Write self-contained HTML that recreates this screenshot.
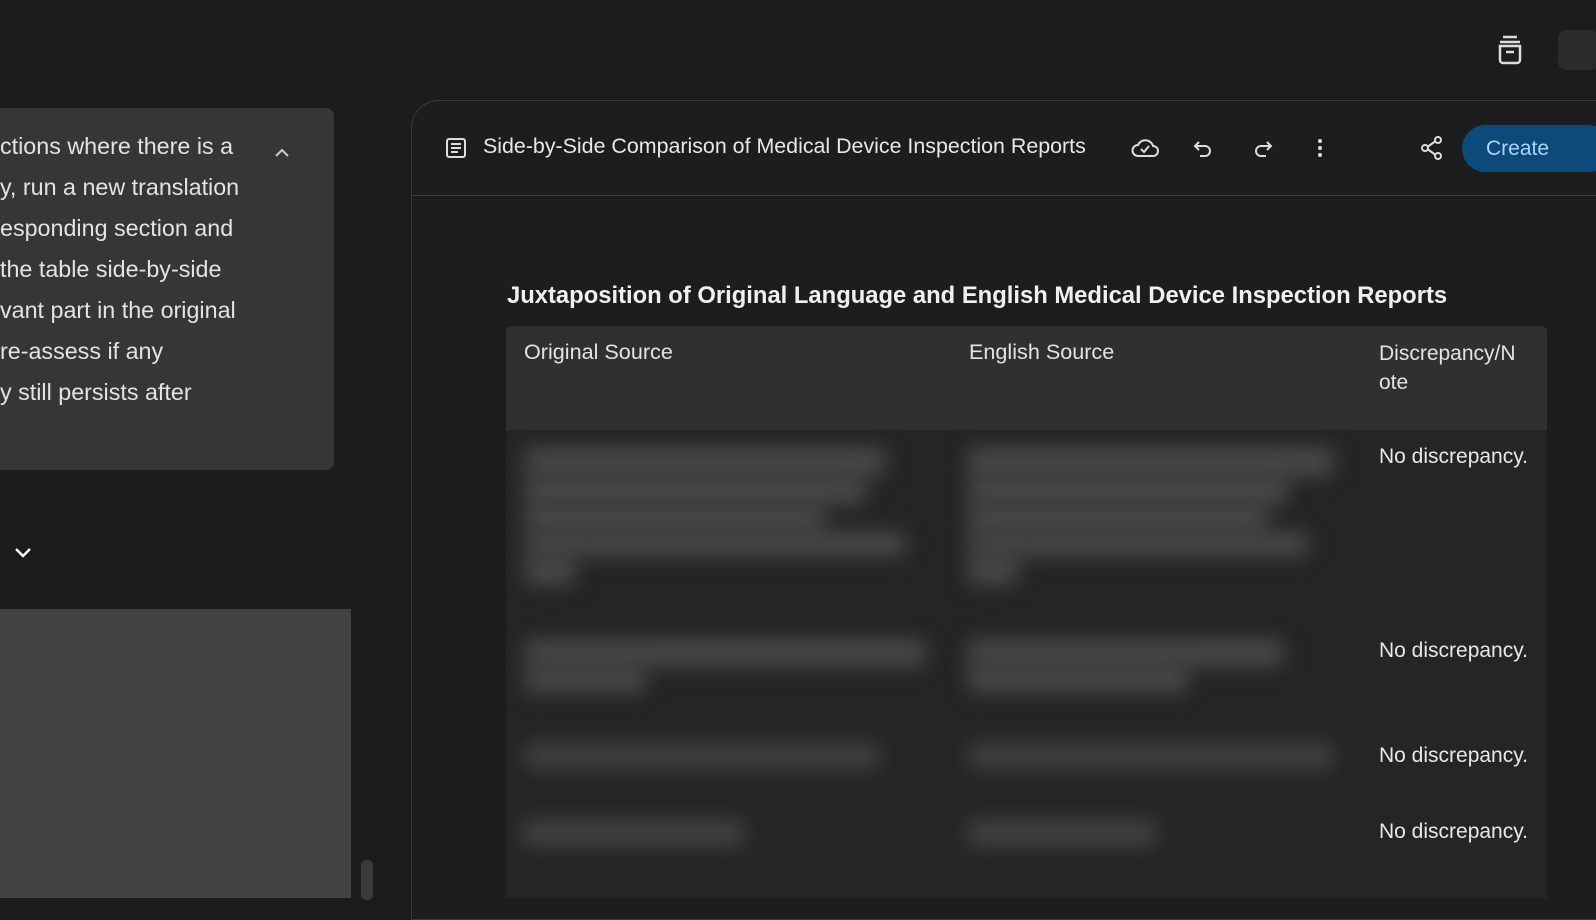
<!DOCTYPE html>
<html><head><style>
*{margin:0;padding:0;box-sizing:border-box}
body{width:1596px;height:898px;overflow:hidden;background:#1b1c1e;font-family:"Liberation Sans",sans-serif;color:#e3e3e3;position:relative}
.abs{position:absolute}
.bubble{left:0;top:108px;width:334px;height:362px;background:#353638;border-radius:0 8px 8px 0}
.panel{left:411px;top:100px;width:1200px;height:820px;border:1px solid #3a3b3d;border-right:none;border-radius:28px 0 0 0;background:#1c1d1f}
.hline{left:412px;top:195px;width:1184px;height:1px;background:#3c3d40}
.blur{filter:blur(10px);background:#4a4a4a;position:absolute;border-radius:4px}
.nd{position:absolute;left:1379px;font-size:21px;color:#e8e8e8;white-space:nowrap}
</style></head><body>
<div class="abs bubble"></div>
<div class="abs" style="left:0;top:126px;font-size:23.3px;line-height:41px;color:#e3e3e3;white-space:pre">ctions where there is a
y, run a new translation
esponding section and
the table side-by-side
vant part in the original
re-assess if any
y still persists after</div>
<svg class="abs" style="left:273px;top:146px" width="18" height="14" viewBox="0 0 18 14"><path d="M3 10 L9 4 L15 10" stroke="#ccc" stroke-width="2" fill="none"/></svg>
<svg class="abs" style="left:12px;top:545px" width="22" height="16" viewBox="0 0 22 16"><path d="M4 4 L11 11 L18 4" stroke="#fff" stroke-width="2.4" fill="none"/></svg>
<div class="abs" style="left:0;top:609px;width:351px;height:289px;background:#434343"></div>
<div class="abs" style="left:361px;top:860px;width:12px;height:40px;background:#3a3a3a;border-radius:5px"></div>

<div class="abs panel"></div>
<div class="abs hline"></div>
<svg class="abs" style="left:444px;top:136px" width="24" height="24" viewBox="0 0 24 24"><rect x="3" y="3" width="18" height="18" rx="2" stroke="#ddd" stroke-width="2" fill="none"/><path d="M7 8h10M7 12h10M7 16h7" stroke="#ddd" stroke-width="2"/></svg>
<div class="abs" style="left:483px;top:134px;font-size:21.4px;color:#e8e8e8;white-space:nowrap">Side-by-Side Comparison of Medical Device Inspection Reports</div>
<svg class="abs" style="left:1130px;top:135px" width="30" height="26" viewBox="0 0 30 26"><path d="M8 21h15a5 5 0 0 0 0-10 8 8 0 0 0-15-1 5.5 5.5 0 0 0 0 11z" stroke="#ddd" stroke-width="2" fill="none"/><path d="M11 14l3 3 5-6" stroke="#ddd" stroke-width="2" fill="none"/></svg>
<svg class="abs" style="left:1192px;top:137px" width="24" height="24" viewBox="0 0 24 24"><path d="M7 5 L3 9 L7 13" stroke="#ddd" stroke-width="2" fill="none"/><path d="M3 9h10a5 5 0 0 1 0 10H8" stroke="#ddd" stroke-width="2" fill="none"/></svg>
<svg class="abs" style="left:1250px;top:137px" width="24" height="24" viewBox="0 0 24 24"><path d="M17 5 L21 9 L17 13" stroke="#ddd" stroke-width="2" fill="none"/><path d="M21 9H11a5 5 0 0 0 0 10h5" stroke="#ddd" stroke-width="2" fill="none"/></svg>
<svg class="abs" style="left:1310px;top:137px" width="20" height="24" viewBox="0 0 20 24"><circle cx="10" cy="4" r="2" fill="#ddd"/><circle cx="10" cy="11" r="2" fill="#ddd"/><circle cx="10" cy="18" r="2" fill="#ddd"/></svg>
<svg class="abs" style="left:1418px;top:134px" width="28" height="28" viewBox="0 0 28 28"><circle cx="20" cy="6" r="3" stroke="#ddd" stroke-width="2" fill="none"/><circle cx="7" cy="14" r="3" stroke="#ddd" stroke-width="2" fill="none"/><circle cx="20" cy="22" r="3" stroke="#ddd" stroke-width="2" fill="none"/><path d="M10 12.5l7-5M10 15.5l7 5" stroke="#ddd" stroke-width="2"/></svg>
<div class="abs" style="left:1462px;top:125px;width:150px;height:47px;border-radius:24px;background:#0b4a7a;color:#a8d4ff;font-size:21px;line-height:47px;padding-left:24px">Create</div>
<svg class="abs" style="left:1495px;top:34px" width="30" height="32" viewBox="0 0 30 32"><path d="M8 3h14M5 8h20" stroke="#ddd" stroke-width="2.5"/><path d="M5 12h20v14a3 3 0 0 1-3 3H8a3 3 0 0 1-3-3z" stroke="#ddd" stroke-width="2.5" fill="none"/><path d="M11 18h8" stroke="#ddd" stroke-width="2.5"/></svg>
<div class="abs" style="left:1558px;top:30px;width:40px;height:40px;border-radius:8px;background:#2a2b2d"></div>

<div class="abs" style="left:507px;top:282px;font-size:23.8px;font-weight:bold;color:#f0f0f0;white-space:nowrap">Juxtaposition of Original Language and English Medical Device Inspection Reports</div>
<div class="abs" style="left:506px;top:326px;width:1041px;height:104px;background:#2f3032;border-radius:6px 6px 0 0"></div>
<div class="abs" style="left:506px;top:430px;width:1041px;height:468px;background:#252526"></div>
<div class="abs" style="left:524px;top:339px;font-size:21.6px">Original Source</div>
<div class="abs" style="left:969px;top:339px;font-size:21.6px">English Source</div>
<div class="abs" style="left:1379px;top:339px;font-size:21px;line-height:29px">Discrepancy/N<br>ote</div>

<div class="blur" style="left:525px;top:448px;width:360px;height:28px"></div>
<div class="blur" style="left:525px;top:476px;width:340px;height:28px"></div>
<div class="blur" style="left:525px;top:504px;width:300px;height:28px"></div>
<div class="blur" style="left:525px;top:532px;width:380px;height:24px"></div>
<div class="blur" style="left:525px;top:556px;width:50px;height:28px"></div>
<div class="blur" style="left:968px;top:448px;width:365px;height:28px"></div>
<div class="blur" style="left:968px;top:476px;width:320px;height:28px"></div>
<div class="blur" style="left:968px;top:504px;width:300px;height:28px"></div>
<div class="blur" style="left:968px;top:532px;width:340px;height:24px"></div>
<div class="blur" style="left:968px;top:556px;width:50px;height:28px"></div>
<div class="blur" style="left:525px;top:640px;width:400px;height:26px"></div>
<div class="blur" style="left:525px;top:666px;width:120px;height:26px"></div>
<div class="blur" style="left:968px;top:640px;width:315px;height:26px"></div>
<div class="blur" style="left:968px;top:666px;width:220px;height:26px"></div>
<div class="blur" style="left:525px;top:744px;width:355px;height:24px;opacity:.8"></div>
<div class="blur" style="left:968px;top:744px;width:365px;height:24px;opacity:.8"></div>
<div class="blur" style="left:522px;top:820px;width:222px;height:26px;opacity:.8"></div>
<div class="blur" style="left:968px;top:820px;width:188px;height:26px;opacity:.8"></div>

<div class="nd" style="top:445px">No discrepancy.</div>
<div class="nd" style="top:639px">No discrepancy.</div>
<div class="nd" style="top:744px">No discrepancy.</div>
<div class="nd" style="top:820px">No discrepancy.</div>
</body></html>
